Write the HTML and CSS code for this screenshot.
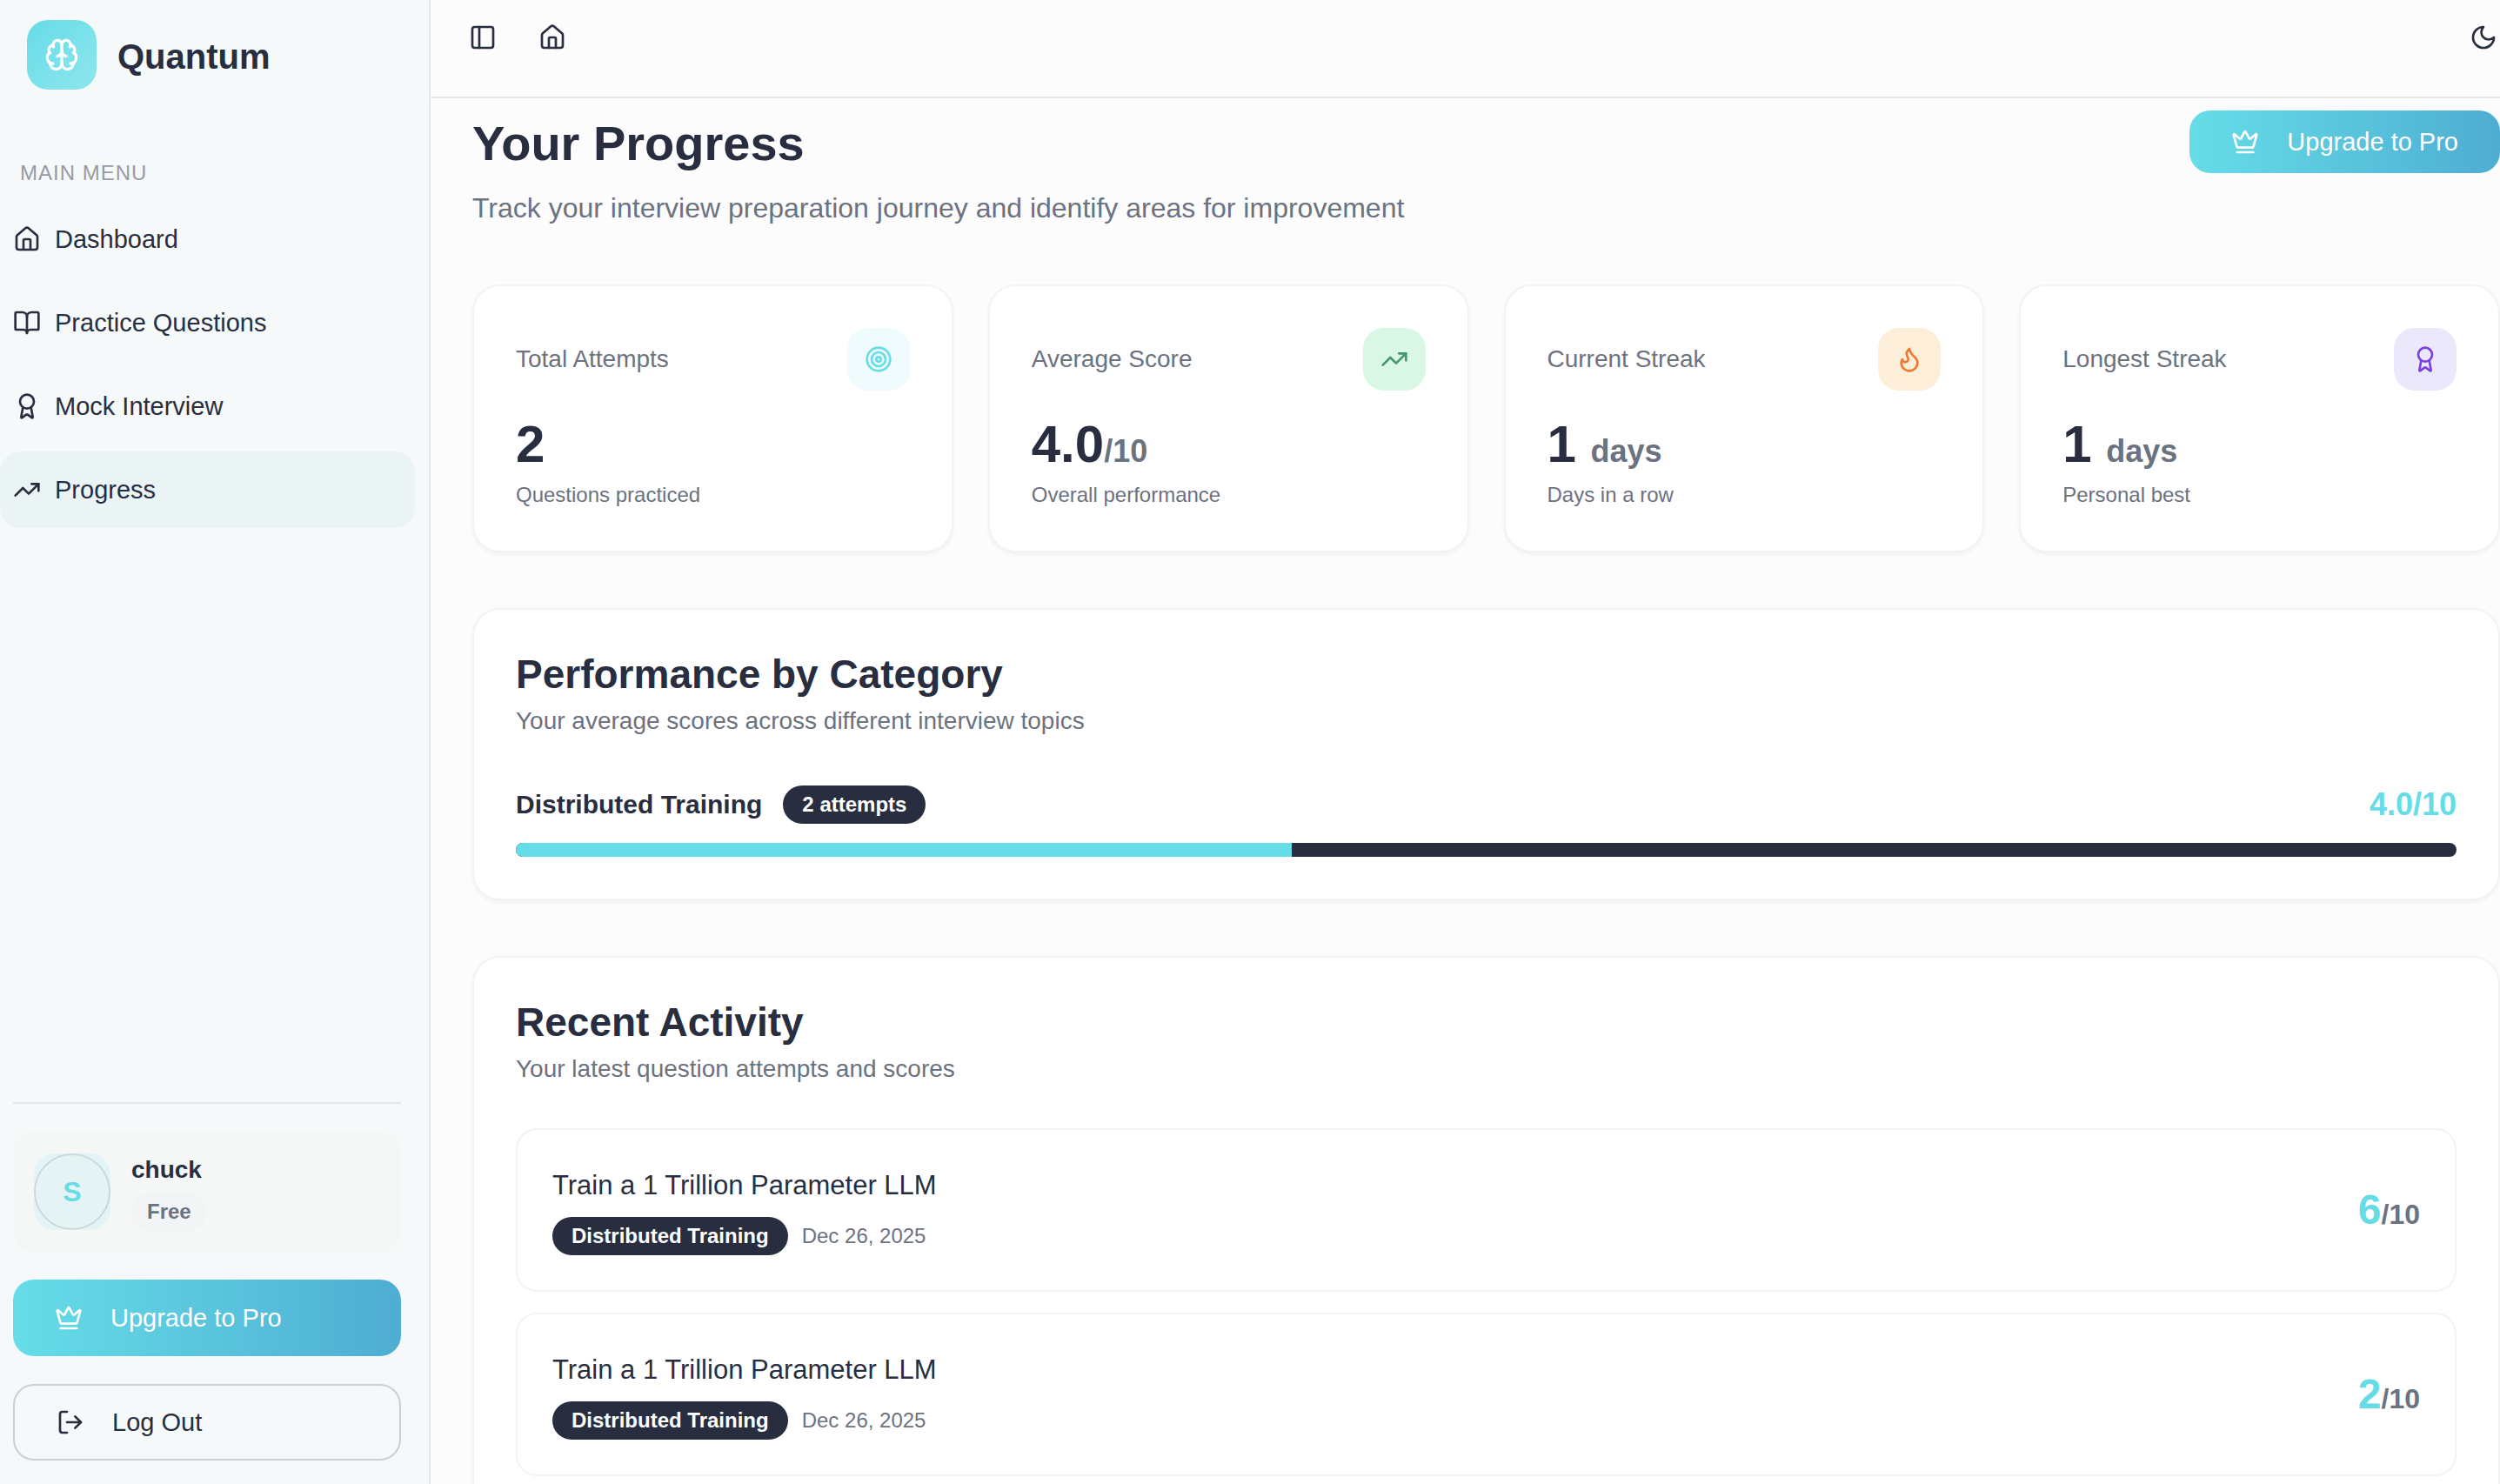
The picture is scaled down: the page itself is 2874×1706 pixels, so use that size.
FILE: index.html
```html
<!DOCTYPE html>
<html lang="en">
<head>
<meta charset="utf-8">
<meta name="viewport" content="width=device-width, initial-scale=1">
<title>Quantum – Your Progress</title>
<link rel="stylesheet" href="styles.css">
</head>
<body>
<svg class="sprite" aria-hidden="true">
  <symbol id="brain" viewBox="0 0 24 24"><path d="M12 18V5"/><path d="M15 13a4.17 4.17 0 0 1-3-4 4.17 4.17 0 0 1-3 4"/><path d="M17.598 6.5A3 3 0 1 0 12 5a3 3 0 1 0-5.598 1.5"/><path d="M17.997 5.125a4 4 0 0 1 2.526 5.77"/><path d="M18 18a4 4 0 0 0 2-7.464"/><path d="M19.967 17.483A4 4 0 1 1 12 18a4 4 0 1 1-7.967-.517"/><path d="M6 18a4 4 0 0 1-2-7.464"/><path d="M6.003 5.125a4 4 0 0 0-2.526 5.77"/></symbol>
  <symbol id="house" viewBox="0 0 24 24"><path d="M15 21v-8a1 1 0 0 0-1-1h-4a1 1 0 0 0-1 1v8"/><path d="M3 10a2 2 0 0 1 .709-1.528l7-6a2 2 0 0 1 2.582 0l7 6A2 2 0 0 1 21 10v9a2 2 0 0 1-2 2H5a2 2 0 0 1-2-2z"/></symbol>
  <symbol id="book" viewBox="0 0 24 24"><path d="M12 7v14"/><path d="M3 18a1 1 0 0 1-1-1V4a1 1 0 0 1 1-1h5a4 4 0 0 1 4 4 4 4 0 0 1 4-4h5a1 1 0 0 1 1 1v13a1 1 0 0 1-1 1h-6a3 3 0 0 0-3 3 3 3 0 0 0-3-3z"/></symbol>
  <symbol id="award" viewBox="0 0 24 24"><path d="m15.477 12.89 1.515 8.526a.5.5 0 0 1-.81.47l-3.58-2.687a1 1 0 0 0-1.197 0l-3.586 2.686a.5.5 0 0 1-.81-.469l1.514-8.526"/><circle cx="12" cy="8" r="6"/></symbol>
  <symbol id="trend" viewBox="0 0 24 24"><path d="M16 7h6v6"/><path d="m22 7-8.500 8.500-5-5L2 17"/></symbol>
  <symbol id="crown" viewBox="0 0 24 24"><path d="M11.562 3.266a.5.5 0 0 1 .876 0L15.390 8.870a1 1 0 0 0 1.516.294L21.183 5.500a.5.5 0 0 1 .798.519l-2.834 10.246a1 1 0 0 1-.956.734H5.810a1 1 0 0 1-.957-.734L2.020 6.020a.5.5 0 0 1 .798-.519l4.276 3.664a1 1 0 0 0 1.516-.294z"/><path d="M5 21h14"/></symbol>
  <symbol id="logout" viewBox="0 0 24 24"><path d="m16 17 5-5-5-5"/><path d="M21 12H9"/><path d="M9 21H5a2 2 0 0 1-2-2V5a2 2 0 0 1 2-2h4"/></symbol>
  <symbol id="panel" viewBox="0 0 24 24"><rect width="18" height="18" x="3" y="3" rx="2"/><path d="M9 3v18"/></symbol>
  <symbol id="moon" viewBox="0 0 24 24"><path d="M12 3a6 6 0 0 0 9 9 9 9 0 1 1-9-9Z"/></symbol>
  <symbol id="target" viewBox="0 0 24 24"><circle cx="12" cy="12" r="10"/><circle cx="12" cy="12" r="6"/><circle cx="12" cy="12" r="2"/></symbol>
  <symbol id="flame" viewBox="0 0 24 24"><path d="M8.500 14.500A2.500 2.500 0 0 0 11 12c0-1.380-.5-2-1-3-1.072-2.143-.224-4.054 2-6 .5 2.500 2 4.900 4 6.500 2 1.600 3 3.500 3 5.500a7 7 0 1 1-14 0c0-1.153.433-2.294 1-3a2.500 2.500 0 0 0 2.500 2.500z"/></symbol>
</svg>

<div class="app">
  <aside class="sidebar">
    <div class="brand">
      <span class="brand-mark"><svg class="icon icon-lg"><use href="#brain"/></svg></span>
      <span class="brand-name">Quantum</span>
    </div>

    <h2 class="nav-heading">MAIN MENU</h2>
    <nav class="nav">
      <a class="nav-link" href="#dashboard"><svg class="icon"><use href="#house"/></svg>Dashboard</a>
      <a class="nav-link" href="#practice"><svg class="icon"><use href="#book"/></svg>Practice Questions</a>
      <a class="nav-link" href="#mock"><svg class="icon"><use href="#award"/></svg>Mock Interview</a>
      <a class="nav-link active" href="#progress" aria-current="page"><svg class="icon"><use href="#trend"/></svg>Progress</a>
    </nav>

    <div class="sidebar-footer">
      <div class="user">
        <div class="avatar"><span class="avatar-ring">S</span></div>
        <div class="user-info">
          <span class="user-name">chuck</span>
          <span class="badge badge-plan">Free</span>
        </div>
      </div>
      <button class="button button-primary" type="button"><svg class="icon"><use href="#crown"/></svg>Upgrade to Pro</button>
      <button class="button button-outline" type="button"><svg class="icon"><use href="#logout"/></svg>Log Out</button>
    </div>
  </aside>

  <div class="page">
    <header class="topbar">
      <button class="icon-button" type="button" aria-label="Toggle sidebar"><svg class="icon"><use href="#panel"/></svg></button>
      <a class="icon-button" href="#home" aria-label="Home"><svg class="icon"><use href="#house"/></svg></a>
      <button class="icon-button push" type="button" aria-label="Toggle theme"><svg class="icon"><use href="#moon"/></svg></button>
    </header>

    <main class="content" id="progress">
      <div class="page-head">
        <div>
          <h1 class="page-title">Your Progress</h1>
          <p class="page-subtitle">Track your interview preparation journey and identify areas for improvement</p>
        </div>
        <button class="button button-primary button-compact" type="button"><svg class="icon"><use href="#crown"/></svg>Upgrade to Pro</button>
      </div>

      <div class="stats">
        <section class="card">
          <div class="stat-head"><h2 class="stat-label">Total Attempts</h2><span class="tile tile-cyan"><svg class="icon"><use href="#target"/></svg></span></div>
          <p class="stat-value">2</p>
          <p class="stat-note">Questions practiced</p>
        </section>
        <section class="card">
          <div class="stat-head"><h2 class="stat-label">Average Score</h2><span class="tile tile-green"><svg class="icon"><use href="#trend"/></svg></span></div>
          <p class="stat-value">4.0<span class="stat-unit">/10</span></p>
          <p class="stat-note">Overall performance</p>
        </section>
        <section class="card">
          <div class="stat-head"><h2 class="stat-label">Current Streak</h2><span class="tile tile-orange"><svg class="icon"><use href="#flame"/></svg></span></div>
          <p class="stat-value">1 <span class="stat-unit">days</span></p>
          <p class="stat-note">Days in a row</p>
        </section>
        <section class="card">
          <div class="stat-head"><h2 class="stat-label">Longest Streak</h2><span class="tile tile-violet"><svg class="icon"><use href="#award"/></svg></span></div>
          <p class="stat-value">1 <span class="stat-unit">days</span></p>
          <p class="stat-note">Personal best</p>
        </section>
      </div>

      <section class="card">
        <h2 class="card-title">Performance by Category</h2>
        <p class="card-text">Your average scores across different interview topics</p>
        <div class="category">
          <h3 class="category-name">Distributed Training</h3>
          <span class="badge">2 attempts</span>
          <span class="category-score">4.0/10</span>
        </div>
        <div class="meter" role="progressbar" aria-label="Distributed Training" aria-valuenow="40" aria-valuemin="0" aria-valuemax="100"><div class="meter-fill" style="width: 40%"></div></div>
      </section>

      <section class="card">
        <h2 class="card-title">Recent Activity</h2>
        <p class="card-text">Your latest question attempts and scores</p>
        <ul class="activity">
          <li class="attempt">
            <div>
              <h3 class="attempt-title">Train a 1 Trillion Parameter LLM</h3>
              <div class="attempt-meta"><span class="badge">Distributed Training</span><time datetime="2025-12-26">Dec 26, 2025</time></div>
            </div>
            <p class="score">6<span class="score-max">/10</span></p>
          </li>
          <li class="attempt">
            <div>
              <h3 class="attempt-title">Train a 1 Trillion Parameter LLM</h3>
              <div class="attempt-meta"><span class="badge">Distributed Training</span><time datetime="2025-12-26">Dec 26, 2025</time></div>
            </div>
            <p class="score">2<span class="score-max">/10</span></p>
          </li>
        </ul>
      </section>
    </main>
  </div>
</div>
</body>
</html>
```
FILE: styles.css
```css
:root {
  --ink: #282e3f;
  --muted: #6b7280;
  --cyan: #66dce7;
  --line: #e5e6ea;
  --line-soft: #f3f3f4;
}

* {
  box-sizing: border-box;
  margin: 0;
  padding: 0;
}

body {
  font-family: "Liberation Sans", Arial, sans-serif;
  font-size: 24px;
  line-height: 32px;
  color: var(--ink);
  background: #fcfcfc;
}

a {
  color: inherit;
  text-decoration: none;
}

button {
  font: inherit;
  color: inherit;
  background: none;
  border: 0;
  cursor: pointer;
}

.sprite {
  display: none;
}

.icon {
  display: block;
  flex: none;
  width: 32px;
  height: 32px;
  fill: none;
  stroke: currentColor;
  stroke-width: 2;
  stroke-linecap: round;
  stroke-linejoin: round;
}

.icon-lg {
  width: 40px;
  height: 40px;
}

.app {
  display: flex;
  height: 100vh;
}

/* Sidebar */
.sidebar {
  display: flex;
  flex: none;
  flex-direction: column;
  width: 495px;
  padding: 23px 0 27px;
  background: #f5f9fa;
  border-right: 2px solid var(--line);
}

.brand {
  display: flex;
  align-items: center;
  gap: 24px;
  padding-left: 31px;
}

.brand-mark {
  display: grid;
  place-items: center;
  width: 80px;
  height: 80px;
  color: #fff;
  background: linear-gradient(135deg, #66dce7, #8ee6ee);
  border-radius: 24px;
}

.brand-name {
  padding-top: 4px;
  font-size: 40px;
  font-weight: 700;
  line-height: 56px;
}

.nav-heading {
  margin-top: 80px;
  padding-left: 23px;
  font-size: 24px;
  font-weight: 400;
  letter-spacing: 1px;
  color: #999ba4;
}

.nav {
  display: flex;
  flex-direction: column;
  gap: 8px;
  margin-top: 16px;
  padding-right: 16px;
}

.nav-link {
  display: flex;
  align-items: center;
  gap: 16px;
  height: 88px;
  padding-left: 15px;
  font-size: 29px;
  line-height: 40px;
  border-radius: 24px;
}

.nav-link.active {
  background: #ebf4f5;
}

.sidebar-footer {
  display: flex;
  flex-direction: column;
  gap: 32px;
  margin: auto 32px 0 15px;
  padding-top: 32px;
  border-top: 2px solid var(--line);
}

.user {
  display: flex;
  align-items: center;
  gap: 24px;
  padding: 24px;
  background: #f5f7f7;
  border-radius: 24px;
}

.avatar {
  width: 88px;
  height: 88px;
  background: #e3f4f6;
  border-radius: 24px;
}

.avatar-ring {
  display: grid;
  place-items: center;
  height: 100%;
  font-size: 32px;
  font-weight: 700;
  color: var(--cyan);
  background: #e6f3f4;
  border: 2px solid #cad9da;
  border-radius: 50%;
}

.user-info {
  display: flex;
  flex-direction: column;
  align-items: flex-start;
  gap: 6px;
}

.user-name {
  font-size: 28px;
  font-weight: 700;
  line-height: 40px;
}

.badge {
  padding: 6px 22px;
  font-size: 24px;
  font-weight: 700;
  color: #fff;
  background: var(--ink);
  border-radius: 22px;
}

.badge-plan {
  padding: 6px 18px;
  color: var(--muted);
  background: #f3f4f6;
}

.button {
  display: flex;
  align-items: center;
  gap: 32px;
  height: 88px;
  padding: 0 48px;
  font-size: 29px;
  line-height: 40px;
  white-space: nowrap;
  border-radius: 24px;
}

.button-primary {
  color: #fff;
  background: linear-gradient(90deg, #66dde8, #4eadd2);
}

.button-outline {
  border: 2px solid #cbcfd0;
}

.button-compact {
  flex: none;
  height: 72px;
}

/* Page */
.page {
  display: flex;
  flex: 1;
  flex-direction: column;
  min-width: 0;
}

.topbar {
  display: flex;
  flex: none;
  gap: 48px;
  padding: 27px 3px 52px 44px;
  border-bottom: 2px solid var(--line);
}

.push {
  margin-left: auto;
}

.content {
  display: flex;
  flex: 1;
  flex-direction: column;
  gap: 64px;
  min-height: 0;
  padding: 14px 0 64px 48px;
  overflow: auto;
  scrollbar-width: none;
}

.content > * {
  flex: none;
}

.page-head {
  display: flex;
  align-items: flex-start;
  justify-content: space-between;
}

.page-title {
  font-size: 56px;
  line-height: 76px;
}

.page-subtitle {
  margin-top: 12px;
  font-size: 32px;
  line-height: 48px;
  color: var(--muted);
}

.stats {
  display: grid;
  grid-template-columns: repeat(4, 1fr);
  gap: 40px;
}

.card {
  padding: 48px;
  background: #fff;
  border: 2px solid var(--line-soft);
  border-radius: 32px;
  box-shadow: 0 2px 4px rgba(0, 0, 0, 0.05);
}

.stat-head {
  display: flex;
  align-items: center;
  justify-content: space-between;
}

.stat-label {
  font-size: 28px;
  font-weight: 400;
  line-height: 40px;
  color: var(--muted);
}

.tile {
  display: grid;
  place-items: center;
  width: 72px;
  height: 72px;
  border-radius: 24px;
}

.tile-cyan {
  color: var(--cyan);
  background: #effbfd;
}

.tile-green {
  color: #43976b;
  background: #daf7e6;
}

.tile-orange {
  color: #ec7a33;
  background: #fdeeda;
}

.tile-violet {
  color: #7a40e6;
  background: #ece8fc;
}

.stat-value {
  margin: 24px 0 4px;
  font-size: 60px;
  font-weight: 700;
  line-height: 76px;
}

.stat-unit {
  font-size: 36px;
  line-height: 40px;
  color: var(--muted);
}

.stat-note {
  color: var(--muted);
}

.card-title {
  font-size: 46px;
  line-height: 52px;
}

.card-text {
  margin: 8px 0 48px;
  font-size: 28px;
  line-height: 40px;
  color: var(--muted);
}

.category {
  display: flex;
  align-items: center;
  gap: 24px;
}

.category-name {
  font-size: 30px;
  line-height: 48px;
}

.category-score {
  margin-left: auto;
  font-size: 36px;
  font-weight: 700;
  line-height: 56px;
  color: var(--cyan);
}

.meter {
  height: 16px;
  margin-top: 16px;
  overflow: hidden;
  background: var(--ink);
  border-radius: 8px;
}

.meter-fill {
  height: 100%;
  background: var(--cyan);
}

.activity {
  display: grid;
  gap: 24px;
  list-style: none;
}

.attempt {
  display: flex;
  align-items: center;
  justify-content: space-between;
  padding: 40px;
  border: 2px solid var(--line-soft);
  border-radius: 24px;
}

.attempt-title {
  font-size: 31px;
  font-weight: 400;
  line-height: 48px;
}

.attempt-meta {
  display: flex;
  align-items: center;
  gap: 16px;
  margin-top: 12px;
  color: var(--muted);
}

.score {
  font-size: 48px;
  font-weight: 700;
  line-height: 56px;
  color: var(--cyan);
}

.score-max {
  font-size: 32px;
  line-height: 40px;
  color: var(--muted);
}
```
